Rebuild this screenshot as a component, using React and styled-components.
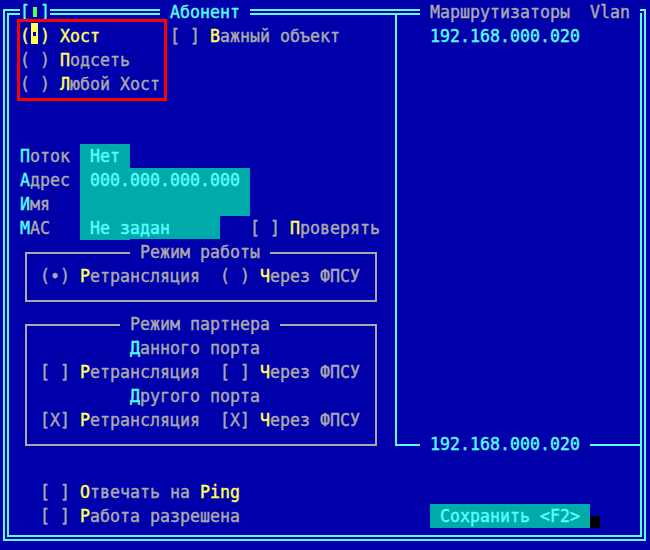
import styled, { createGlobalStyle } from "styled-components";

const C = {
    blue: "#0000aa",
    gray: "#aaaaaa",
    yellow: "#ffff55",
    cyan: "#55ffff",
    teal: "#00aaaa",
    green: "#55ff55",
    red: "#ff0000",
};

const Global = createGlobalStyle`
    html, body {
        margin: 0;
        padding: 0;
        background: ${C.blue};
    }
`

// text-mode screen: 65 columns x 23 rows, 10x24 px cells
const Screen = styled.div`
    display: grid;
    grid-template-columns: repeat(65, 10px);
    grid-template-rows: repeat(23, 24px);
    width: 650px;
    height: 550px;
    overflow: hidden;
    background: ${C.blue};
    color: ${C.gray};
    font-family: "DejaVu Sans Mono", "Liberation Mono", monospace;
    font-size: 16.61px;
    line-height: 24px;
    -webkit-text-stroke: 0.4px currentColor;
`

const Frame = styled.div`
    grid-area: 1 / 1 / 24 / 66;
    margin: 9px 4px 11px 3px;
    border: 6px double ${C.cyan};
`

const RouterPane = styled.div`
    grid-area: 1 / 40 / 20 / 66;
    margin: 13px 9px 10px 5px;
    border-left: 2px solid ${C.cyan};
    border-bottom: 2px solid ${C.cyan};
`

const GroupBox = styled.div`
    grid-area: ${p => `${p.$r1 + 1} / ${p.$c1 + 1} / ${p.$r2 + 2} / ${p.$c2 + 2}`};
    margin: 12px 3px 10px 5px;
    border: 2px solid ${C.gray};
`

// VGA glyphs are taller than DejaVu's
const Glyphs = styled.span`
    display: inline-block;
    transform: translateY(0.5px) scaleY(1.1);
    transform-origin: 50% 60%;
`

const Txt = styled(Glyphs)`
    grid-row: ${p => p.$r + 1};
    grid-column: ${p => p.$c + 1};
    justify-self: start;
    white-space: pre;
    background: ${C.blue};
    color: ${p => p.$color || C.gray};
`

const Hot = styled.span`
    color: ${p => p.$color || C.yellow};
`

const Field = styled.span`
    grid-row: ${p => p.$r + 1};
    grid-column: ${p => `${p.$c + 1} / span ${p.$w}`};
    white-space: pre;
    background: ${C.teal};
    color: ${C.cyan};
`

const Pip = styled.span`
    grid-row: 1;
    grid-column: 4;
    align-self: start;
    justify-self: start;
    z-index: 1;
    width: 4px;
    height: 10px;
    margin: 7px 0 0 3px;
    background: ${C.green};
`

const Cursor = styled.span`
    grid-row: 2;
    grid-column: 4;
    align-self: start;
    justify-self: start;
    z-index: 1;
    display: flex;
    align-items: center;
    justify-content: center;
    width: 7px;
    height: 21px;
    margin: -1px 0 0 1px;
    background: ${C.yellow};

    &::after {
        content: "";
        width: 3px;
        height: 4px;
        background: ${C.blue};
    }
`

const Shadow = styled.span`
    grid-row: ${p => p.$r + 1};
    grid-column: ${p => p.$c + 1};
    align-self: end;
    height: 12px;
    background: #000;
`

const Highlight = styled.div`
    grid-area: 1 / 2 / 6 / 18;
    z-index: 2;
    margin: 19px 3px 19px 7px;
    border: 3px solid ${C.red};
`

function Mode( props ) {
    return (
        <>
            <Txt $r={ props.r } $c={ 4 }>{ props.mark } <Hot>Р</Hot>етрансляция</Txt>
            <Txt $r={ props.r } $c={ 22 }>{ props.mark2 || props.mark } <Hot>Ч</Hot>ерез ФПСУ</Txt>
        </>
    );
}

function App() {
    return (
        <>
            <Global />
            <Screen>
                <Frame />
                <RouterPane />
                <GroupBox $r1={ 10 } $c1={ 2 } $r2={ 12 } $c2={ 37 } />
                <GroupBox $r1={ 13 } $c1={ 2 } $r2={ 18 } $c2={ 37 } />

                <Txt $r={ 0 } $c={ 2 } $color={ C.cyan }>[ ]</Txt>
                <Pip />
                <Txt $r={ 0 } $c={ 16 } $color={ C.cyan }> Абонент </Txt>
                <Txt $r={ 0 } $c={ 42 }> Маршрутизаторы  Vlan </Txt>

                <Txt $r={ 1 } $c={ 2 } $color={ C.yellow }>( ) Хост</Txt>
                <Cursor />
                <Txt $r={ 2 } $c={ 2 }>( ) <Hot>П</Hot>одсеть</Txt>
                <Txt $r={ 3 } $c={ 2 }>( ) <Hot>Л</Hot>юбой Хост</Txt>
                <Txt $r={ 1 } $c={ 17 }>[ ] <Hot>В</Hot>ажный объект</Txt>
                <Txt $r={ 1 } $c={ 43 } $color={ C.cyan }>192.168.000.020</Txt>

                <Txt $r={ 6 } $c={ 2 }><Hot $color={ C.cyan }>П</Hot>оток</Txt>
                <Field $r={ 6 } $c={ 8 } $w={ 5 }><Glyphs> Нет</Glyphs></Field>
                <Txt $r={ 7 } $c={ 2 }><Hot $color={ C.cyan }>А</Hot>дрес</Txt>
                <Field $r={ 7 } $c={ 8 } $w={ 17 }><Glyphs> 000.000.000.000</Glyphs></Field>
                <Txt $r={ 8 } $c={ 2 }><Hot $color={ C.cyan }>И</Hot>мя</Txt>
                <Field $r={ 8 } $c={ 8 } $w={ 17 } />
                <Txt $r={ 9 } $c={ 2 }><Hot $color={ C.cyan }>М</Hot>АС</Txt>
                <Field $r={ 9 } $c={ 8 } $w={ 14 }><Glyphs> Не задан</Glyphs></Field>
                <Txt $r={ 9 } $c={ 25 }>[ ] <Hot>П</Hot>роверять</Txt>

                <Txt $r={ 10 } $c={ 13 }> Режим работы </Txt>
                <Mode r={ 11 } mark="(∙)" mark2="( )" />

                <Txt $r={ 13 } $c={ 12 }> Режим партнера </Txt>
                <Txt $r={ 14 } $c={ 13 }><Hot $color={ C.cyan }>Д</Hot>анного порта</Txt>
                <Mode r={ 15 } mark="[ ]" />
                <Txt $r={ 16 } $c={ 13 }><Hot $color={ C.cyan }>Д</Hot>ругого порта</Txt>
                <Mode r={ 17 } mark="[X]" />

                <Txt $r={ 18 } $c={ 42 } $color={ C.cyan }> 192.168.000.020 </Txt>

                <Txt $r={ 20 } $c={ 4 }>[ ] <Hot>О</Hot>твечать на <Hot>Ping</Hot></Txt>
                <Txt $r={ 21 } $c={ 4 }>[ ] <Hot>Р</Hot>абота разрешена</Txt>
                <Field $r={ 21 } $c={ 43 } $w={ 16 }><Glyphs> Сохранить {"<F2>"}</Glyphs></Field>
                <Shadow $r={ 21 } $c={ 59 } />

                <Highlight />
            </Screen>
        </>
    );
}

export default App;
